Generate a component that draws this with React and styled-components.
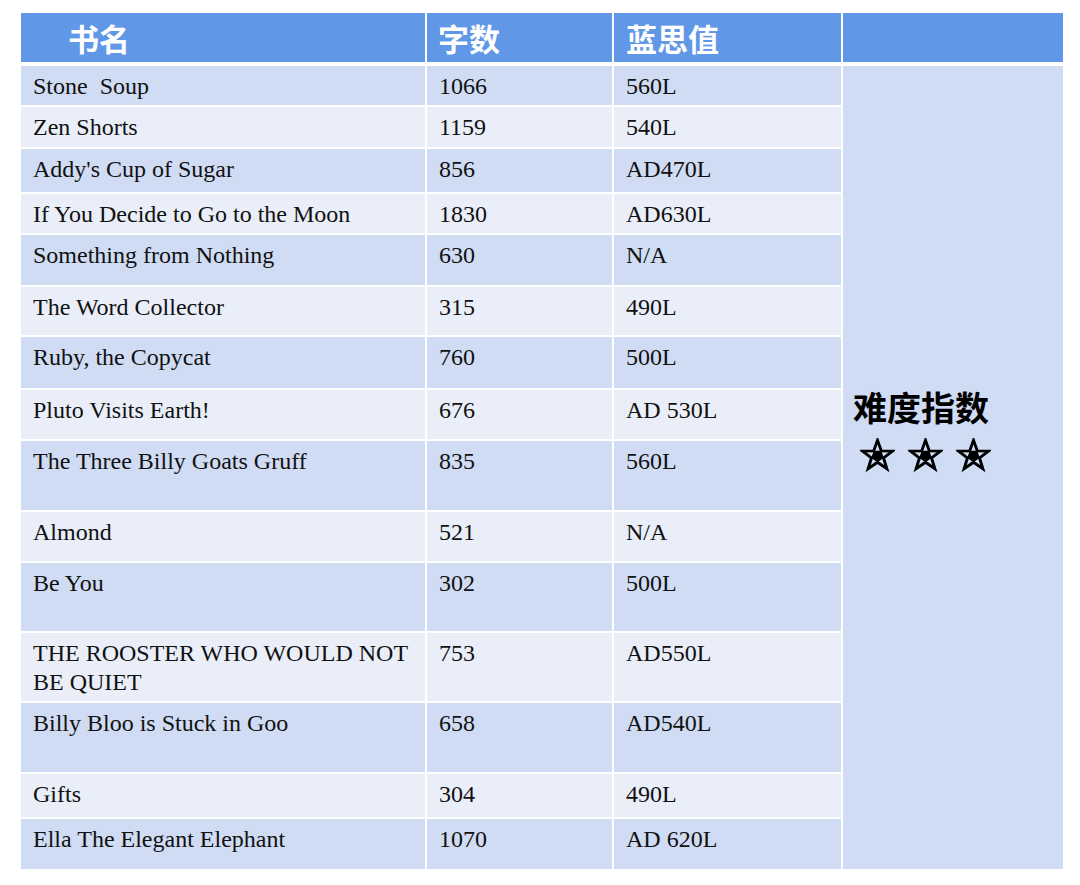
import React from "react";
import styled, { createGlobalStyle } from "styled-components";

const books = [
  { title: "Stone  Soup", words: "1066", lexile: "560L", h: 39 },
  { title: "Zen Shorts", words: "1159", lexile: "540L", h: 40 },
  { title: "Addy's Cup of Sugar", words: "856", lexile: "AD470L", h: 43 },
  { title: "If You Decide to Go to the Moon", words: "1830", lexile: "AD630L", h: 39 },
  { title: "Something from Nothing", words: "630", lexile: "N/A", h: 50 },
  { title: "The Word Collector", words: "315", lexile: "490L", h: 48 },
  { title: "Ruby, the Copycat", words: "760", lexile: "500L", h: 51 },
  { title: "Pluto Visits Earth!", words: "676", lexile: "AD 530L", h: 49 },
  { title: "The Three Billy Goats Gruff", words: "835", lexile: "560L", h: 69 },
  { title: "Almond", words: "521", lexile: "N/A", h: 49 },
  { title: "Be You", words: "302", lexile: "500L", h: 68 },
  { title: "THE ROOSTER WHO WOULD NOT BE QUIET", words: "753", lexile: "AD550L", h: 68 },
  { title: "Billy Bloo is Stuck in Goo", words: "658", lexile: "AD540L", h: 69 },
  { title: "Gifts", words: "304", lexile: "490L", h: 43 },
  { title: "Ella The Elegant Elephant", words: "1070", lexile: "AD 620L", h: 50 },
];

const GlobalStyle = createGlobalStyle`
  body {
    margin: 0;
    background: #ffffff;
  }
`;

const Page = styled.div`
  padding: 11px 0 0 19px;
`;

const Table = styled.table`
  border-collapse: separate;
  border-spacing: 2px;
  table-layout: fixed;
  width: 1046px;
`;

const HeadCell = styled.th`
  height: 49px;
  padding: 0 0 0 ${(p) => p.indent || 12}px;
  border-bottom: 2px solid #ffffff;
  background: #6097e6;
  color: #ffffff;
  font-family: "Noto Sans CJK SC", "Noto Sans", sans-serif;
  font-weight: 700;
  font-size: 31px;
  line-height: 1;
  text-align: left;
  vertical-align: middle;
`;

const Row = styled.tr`
  height: ${(p) => p.h}px;
`;

const Cell = styled.td`
  padding: 6px 12px 0;
  background: ${(p) => (p.dark ? "#d0dcf4" : "#e9eef9")};
  color: #111111;
  font-family: "Liberation Serif", "Times New Roman", serif;
  font-size: 24px;
  line-height: 29px;
  white-space: pre-wrap;
  vertical-align: top;
  overflow: hidden;
`;

const RatingCell = styled.td`
  padding: 0 0 76px 10px;
  background: #d0dcf4;
  vertical-align: middle;
`;

const RatingTitle = styled.div`
  font-family: "Noto Sans CJK SC", "Noto Sans", sans-serif;
  font-weight: 700;
  font-size: 34px;
  line-height: 42px;
  color: #000000;
`;

const Stars = styled.div`
  display: flex;
  gap: 13px;
  padding: 10px 0 0 7px;
`;

function Star() {
  return (
    <svg width="35" height="35" viewBox="0 0 34 34">
      <path
        d="M17 2.2 L20.7 12.5 L31.6 12.8 L22.9 19.4 L26.1 29.9 L17 23.6 L7.9 29.9 L11.1 19.4 L2.4 12.8 L13.3 12.5 Z"
        fill="none"
        stroke="#000"
        strokeWidth="2.8"
        strokeLinejoin="miter"
      />
      <path
        d="M20.2 13.2 L22.1 19 L17 22.7 L11.9 19 L13.8 13.2 Z"
        fill="#000"
        stroke="#000"
        strokeWidth="1.5"
        strokeLinejoin="round"
      />
    </svg>
  );
}

function App() {
  return (
    <Page>
      <GlobalStyle />
      <Table>
        <colgroup>
          <col style={{ width: 404 }} />
          <col style={{ width: 185 }} />
          <col style={{ width: 227 }} />
          <col style={{ width: 220 }} />
        </colgroup>
        <thead>
          <tr>
            <HeadCell indent={47}>书名</HeadCell>
            <HeadCell indent={11}>字数</HeadCell>
            <HeadCell>蓝思值</HeadCell>
            <HeadCell />
          </tr>
        </thead>
        <tbody>
          {books.map((b, i) => (
            <Row key={b.title} h={b.h}>
              <Cell dark={i % 2 === 0}>{b.title}</Cell>
              <Cell dark={i % 2 === 0}>{b.words}</Cell>
              <Cell dark={i % 2 === 0}>{b.lexile}</Cell>
              {i === 0 && (
                <RatingCell rowSpan={books.length}>
                  <RatingTitle>难度指数</RatingTitle>
                  <Stars>
                    <Star />
                    <Star />
                    <Star />
                  </Stars>
                </RatingCell>
              )}
            </Row>
          ))}
        </tbody>
      </Table>
    </Page>
  );
}

export default App;
